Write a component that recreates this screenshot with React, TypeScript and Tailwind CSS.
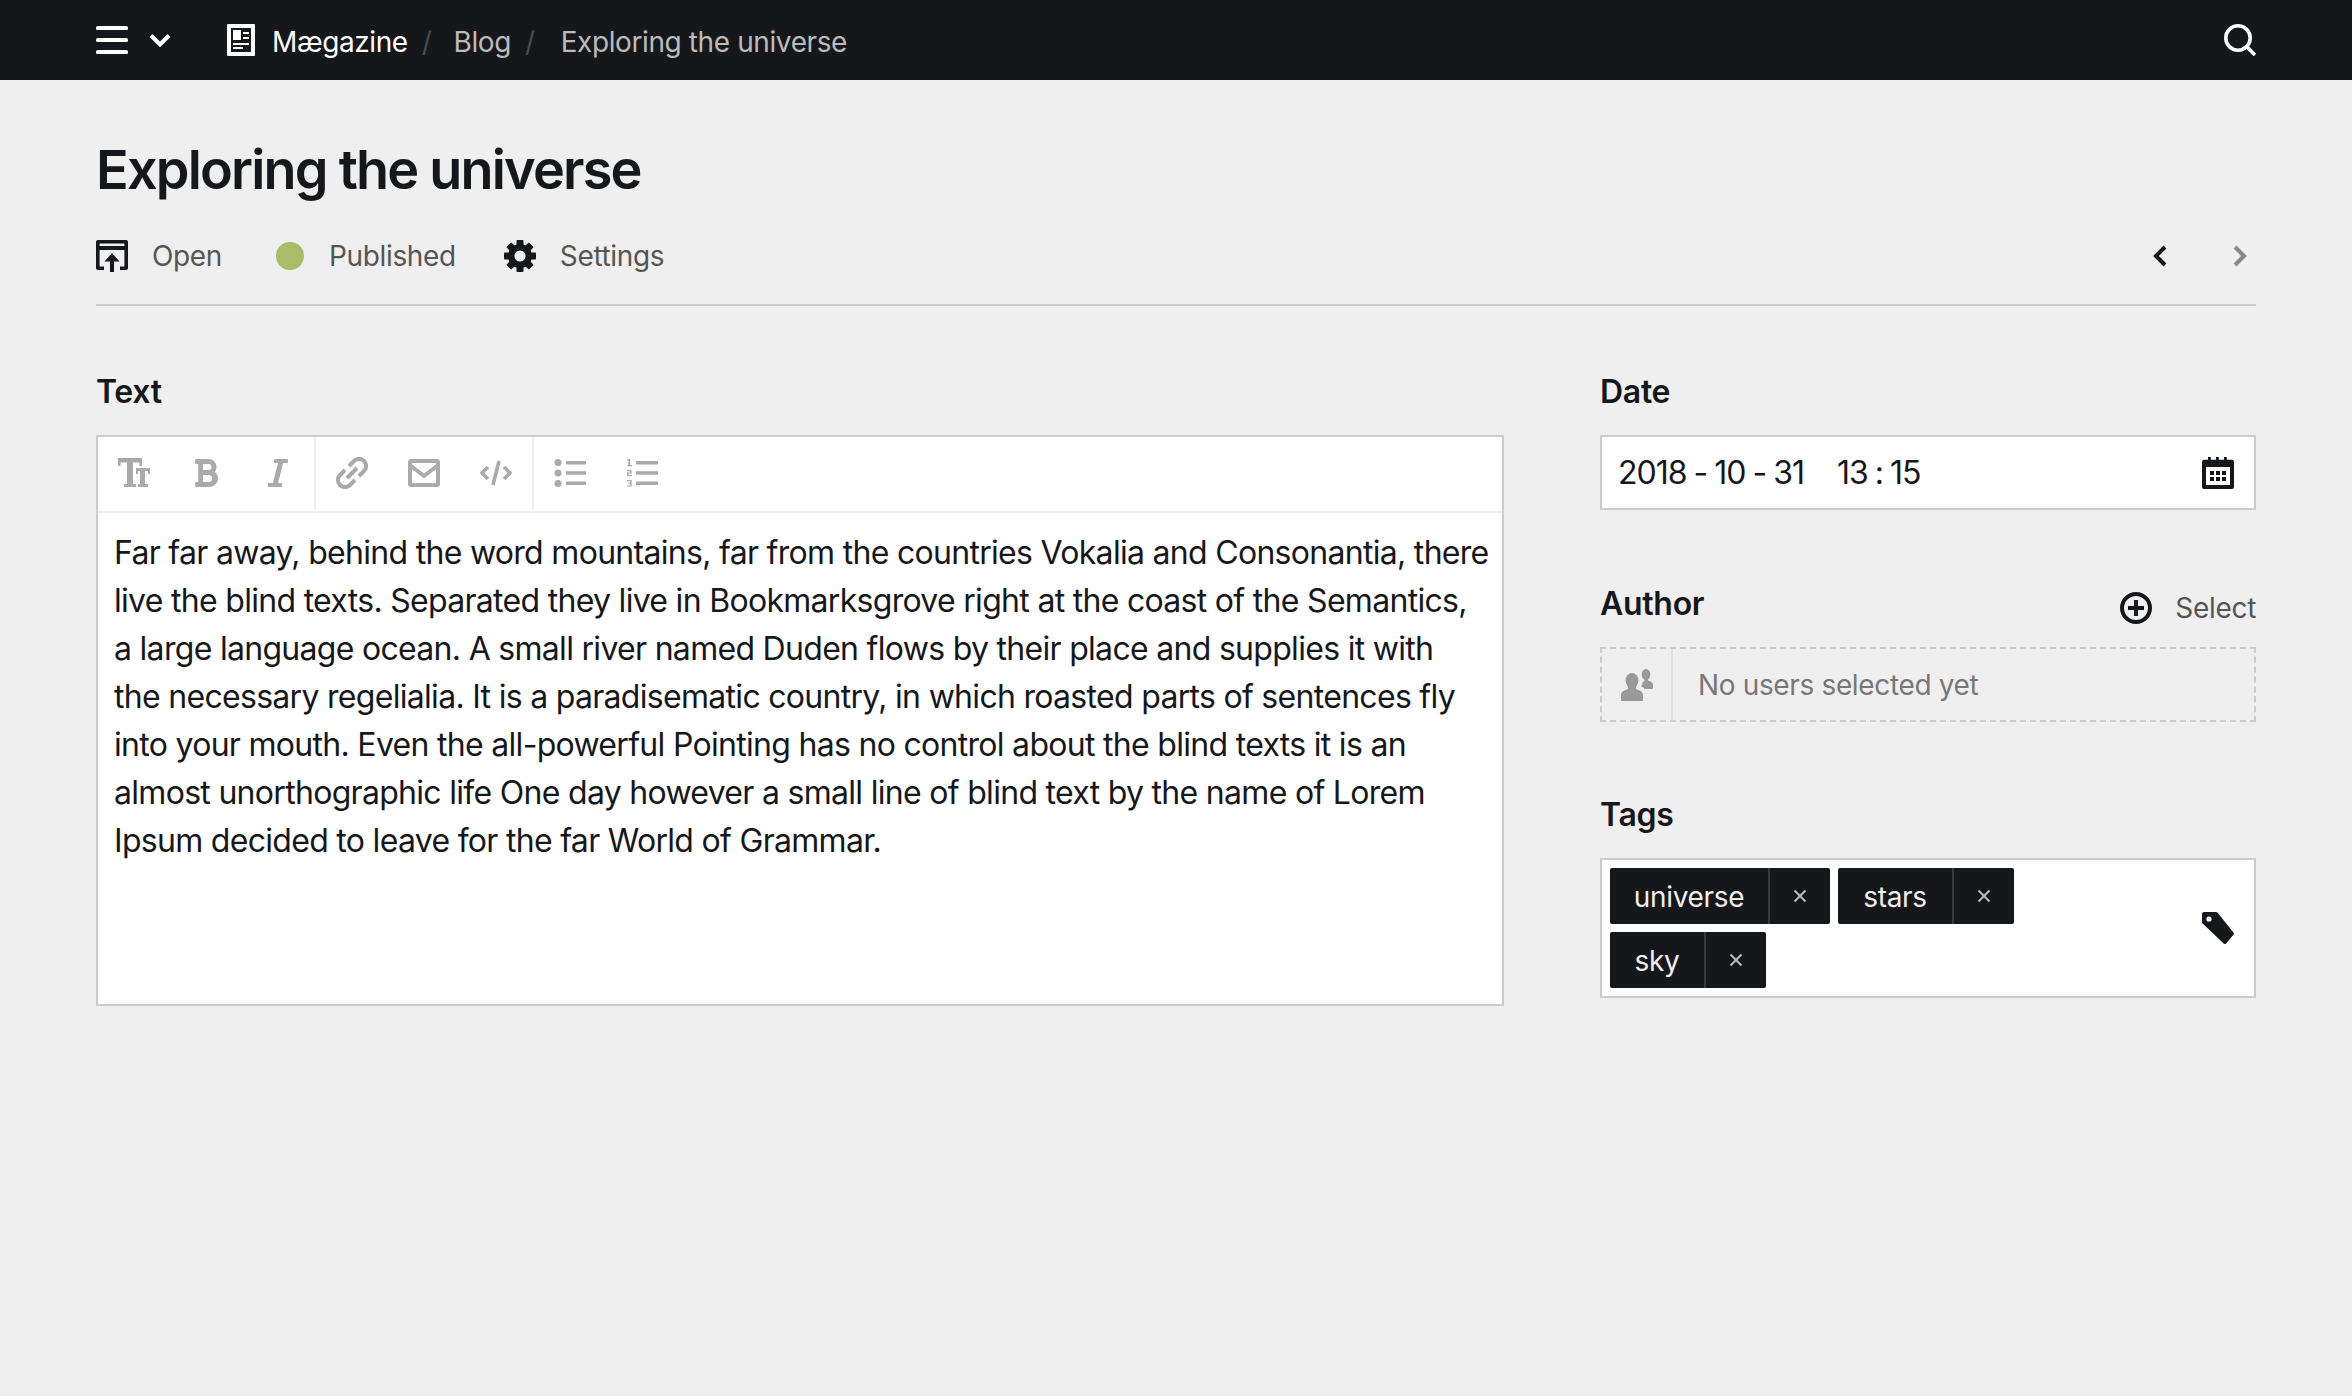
import { FaBold, FaItalic } from "react-icons/fa"

const inter = { fontFamily: "Inter, 'Noto Sans', sans-serif" }

const bodyLines = [
  "Far far away, behind the word mountains, far from the countries Vokalia and Consonantia, there",
  "live the blind texts. Separated they live in Bookmarksgrove right at the coast of the Semantics,",
  "a large language ocean. A small river named Duden flows by their place and supplies it with",
  "the necessary regelialia. It is a paradisematic country, in which roasted parts of sentences fly",
  "into your mouth. Even the all-powerful Pointing has no control about the blind texts it is an",
  "almost unorthographic life One day however a small line of blind text by the name of Lorem",
  "Ipsum decided to leave for the far World of Grammar.",
]

function Icon({ children, className = "" }: { children: React.ReactNode; className?: string }) {
  return (
    <svg viewBox="0 0 16 16" className={`h-8 w-8 shrink-0 ${className}`} fill="currentColor" aria-hidden="true">
      {children}
    </svg>
  )
}

function ToolButton({ children }: { children: React.ReactNode }) {
  return <div className="flex h-full w-[72px] items-center justify-center text-[#aaa]">{children}</div>
}

function Tag({ label, textWidth }: { label: string; textWidth: string }) {
  return (
    <div className="flex h-14 items-stretch rounded-[2px] bg-[#16171a] text-[#efefef]">
      <span className={`flex items-center justify-center pt-[2px] text-[28px] leading-none tracking-[-0.3px] ${textWidth}`}>{label}</span>
      <span className="flex w-[62px] items-center justify-center border-l-2 border-[#3a3b3e]">
        <svg viewBox="0 0 16 16" className="h-4 w-4 text-[#bbb]" stroke="currentColor" strokeWidth="2" fill="none">
          <path d="M2.500 2.500l11 11M13.500 2.500l-11 11" />
        </svg>
      </span>
    </div>
  )
}

export default function App() {
  return (
    <div className="h-[1396px] overflow-hidden bg-[#efefef] text-[#16171a]" style={inter}>
      <header className="flex h-20 items-center justify-between bg-[#16171a] pl-24 pr-24 text-[28px] tracking-[-0.4px] text-white">
        <nav className="flex items-center">
          <svg viewBox="0 0 32 28" className="h-7 w-8" fill="currentColor" aria-hidden="true">
            <rect y="0" width="32" height="4" rx="1.500" />
            <rect y="12" width="32" height="4" rx="1.500" />
            <rect y="24" width="32" height="4" rx="1.500" />
          </svg>
          <svg viewBox="0 0 22 14" className="ml-[21px] h-[14px] w-[22px]" fill="none" stroke="currentColor" strokeWidth="4" aria-hidden="true">
            <path d="M2 2.500l9 9 9-9" />
          </svg>
          <svg viewBox="0 0 28 32" className="ml-[56px] h-8 w-7" fill="currentColor" aria-hidden="true">
            <path fillRule="evenodd" d="M1 0h26a1 1 0 011 1v30a1 1 0 01-1 1H1a1 1 0 01-1-1V1a1 1 0 011-1zm3 4v24h20V4H4zm2 2h8v10H6V6zm10 2h6v2h-6V8zm0 5h6v2h-6v-2zM6 19h16v2H6v-2zm0 4h10v2H6v-2z" />
          </svg>
          <span className="ml-[17px] mt-[3px]">Mægazine</span>
          <span className="ml-[14px] mt-[3px] text-[#4b4c4f]">/</span>
          <span className="ml-[22px] mt-[3px] text-[#bbb]">Blog</span>
          <span className="ml-[14px] mt-[3px] text-[#4b4c4f]">/</span>
          <span className="ml-[26px] mt-[3px] text-[#bbb]">Exploring the universe</span>
        </nav>
        <svg viewBox="0 0 32 32" className="h-8 w-8" fill="none" stroke="currentColor" aria-hidden="true">
          <circle cx="14" cy="14" r="12.200" strokeWidth="3.600" />
          <path d="M23 23l8 8" strokeWidth="3.600" />
        </svg>
      </header>

      <main className="px-24">
        <div className="border-b-2 border-[#ccc] pb-[32px] pt-[58px]">
          <h1 className="text-[54px] font-semibold leading-[64px] tracking-[-1.8px]">Exploring the universe</h1>
          <div className="mt-[38px] flex h-8 items-center justify-between text-[28px] leading-8 tracking-[-0.35px] text-[#555]">
            <div className="flex items-center">
              <Icon className="text-[#16171a]">
                <path d="M0 1a1 1 0 011-1h14a1 1 0 011 1v13a1 1 0 01-1 1h-3v-1.800h2.200V5H1.800v8.200H4V15H1a1 1 0 01-1-1V1zm1.800 2h12.400V1.800H1.800V3zM8 6.600l3.800 4.200H9V16H7v-5.200H4.200L8 6.600z" />
              </Icon>
              <span className="ml-6">Open</span>
              <span className="ml-[54px] h-7 w-7 rounded-full bg-[#a7bd68]" />
              <span className="ml-[25px]">Published</span>
              <svg viewBox="0 0 32 32" className="ml-[48px] h-8 w-8 text-[#16171a]" fill="currentColor" aria-hidden="true">
                <circle cx="16" cy="16" r="8.800" fill="none" stroke="currentColor" strokeWidth="6.400" />
                {[0, 45, 90, 135, 180, 225, 270, 315].map((deg) => (
                  <rect key={deg} x="12.500" y="0" width="7" height="7" rx="1" transform={`rotate(${deg} 16 16)`} />
                ))}
              </svg>
              <span className="ml-[24px]">Settings</span>
            </div>
            <div className="flex items-center gap-[64px] pr-[8px]">
              <svg viewBox="0 0 16 24" className="h-6 w-4 text-[#16171a]" fill="none" stroke="currentColor" strokeWidth="4" aria-hidden="true">
                <path d="M13 3l-9 9 9 9" />
              </svg>
              <svg viewBox="0 0 16 24" className="h-6 w-4 text-[#888]" fill="none" stroke="currentColor" strokeWidth="4" aria-hidden="true">
                <path d="M3 3l9 9-9 9" />
              </svg>
            </div>
          </div>
        </div>

        <div className="mt-[64px] grid grid-cols-[1408px_656px] gap-x-24">
          <section>
            <h2 className="h-[65px] text-[32px] font-semibold leading-[44px] tracking-[-0.3px]">Text</h2>
            <div className="h-[571px] border-2 border-[#ccc] bg-white">
              <div className="flex h-[76px] items-center border-b-2 border-[#efefef] pb-[2px]">
                <div className="flex h-full border-r-2 border-[#efefef]">
                  <ToolButton>
                    <svg viewBox="0 0 32 32" className="h-8 w-8" fill="currentColor" aria-hidden="true">
                      <path d="M0 1h24v8h-2.500V5.500H15V27h3v3H6v-3h3V5.500H2.500V9H0V1z" />
                      <path d="M18 11h14v6h-2v-3h-3v13h3v3H20v-3h2V14h-2v3h-2v-6z" />
                    </svg>
                  </ToolButton>
                  <ToolButton>
                    <FaBold size={32} />
                  </ToolButton>
                  <ToolButton>
                    <FaItalic size={32} />
                  </ToolButton>
                </div>
                <div className="flex h-full border-r-2 border-[#efefef]">
                  <ToolButton>
                    <svg viewBox="0 0 32 32" className="h-8 w-8" fill="none" stroke="currentColor" strokeWidth="4" aria-hidden="true">
                      <path d="M13 9l5-5a7 7 0 0110 10l-5 5M19 23l-5 5A7 7 0 014 18l5-5M11 21l10-10" />
                    </svg>
                  </ToolButton>
                  <ToolButton>
                    <svg viewBox="0 0 32 28" className="h-7 w-8" fill="none" stroke="currentColor" strokeWidth="4" aria-hidden="true">
                      <rect x="2" y="2" width="28" height="24" rx="1" />
                      <path d="M3 7l13 10 13-10" />
                    </svg>
                  </ToolButton>
                  <ToolButton>
                    <svg viewBox="0 0 32 28" className="h-7 w-8" fill="none" stroke="currentColor" strokeWidth="3.600" aria-hidden="true">
                      <path d="M8 8l-6 6 6 6M24 8l6 6-6 6M19 2l-6 24" />
                    </svg>
                  </ToolButton>
                </div>
                <div className="flex h-full">
                  <ToolButton>
                    <svg viewBox="0 0 32 28" className="h-7 w-8" fill="currentColor" aria-hidden="true">
                      <circle cx="4" cy="3.500" r="3.500" />
                      <circle cx="4" cy="14" r="3.500" />
                      <circle cx="4" cy="24.500" r="3.500" />
                      <rect x="12" y="2" width="20" height="3.500" />
                      <rect x="12" y="12.200" width="20" height="3.500" />
                      <rect x="12" y="22.500" width="20" height="3.500" />
                    </svg>
                  </ToolButton>
                  <ToolButton>
                    <svg viewBox="0 0 32 28" className="h-7 w-8" fill="currentColor" aria-hidden="true">
                      <path d="M2 0h2.200v6H6v1.200H1V6h1.400V1.400L1 1.800V.8L2 0z" />
                      <path d="M1 11h4.600v3.600H2.600v1.400h3.200v1.200H1v-3.600h3V12.200H1V11z" />
                      <path d="M1 21h4.600v6.600H1v-1.200h3v-1.600H2v-1.100h2v-1.500H1V21z" />
                      <rect x="10" y="2" width="22" height="3.500" />
                      <rect x="10" y="12.200" width="22" height="3.500" />
                      <rect x="10" y="22.500" width="22" height="3.500" />
                    </svg>
                  </ToolButton>
                </div>
              </div>
              <div className="px-[16px] pt-[16px] text-[32px] leading-[48px] tracking-[-0.7px]">
                {bodyLines.map((line) => (
                  <p key={line} className="whitespace-nowrap">
                    {line}
                  </p>
                ))}
              </div>
            </div>
          </section>

          <aside>
            <h2 className="h-[65px] text-[32px] font-semibold leading-[44px] tracking-[-0.3px]">Date</h2>
            <div className="flex h-[75px] items-center justify-between border-2 border-[#ccc] bg-white pl-[16px] pr-[20px] text-[32px] tracking-[-1px]">
              <div className="flex items-center">
                <span>2018</span>
                <span className="mx-[7px]">-</span>
                <span>10</span>
                <span className="mx-[7px]">-</span>
                <span>31</span>
                <span className="ml-[33px]">13</span>
                <span className="mx-[7px]">:</span>
                <span>15</span>
              </div>
              <Icon>
                <path fillRule="evenodd" d="M3 0h1.400v1.400H7V0h1.400v1.400H11V0h1.400v1.400H15a1 1 0 011 1V15a1 1 0 01-1 1H1a1 1 0 01-1-1V2.400a1 1 0 011-1h2V0zM2 5v9h12V5H2zm2 2h2v2H4V7zm3 0h2v2H7V7zm3 0h2v2h-2V7zM4 10h2v2H4v-2zm3 0h2v2H7v-2zm3 0h2v2h-2v-2z" />
              </Icon>
            </div>

            <div className="mt-[72px] flex h-[65px] items-start justify-between">
              <h2 className="text-[32px] font-semibold leading-[44px] tracking-[-0.3px]">Author</h2>
              <div className="mt-[10px] flex items-center text-[28px] leading-8 tracking-[-0.3px] text-[#555]">
                <svg viewBox="0 0 32 32" className="h-8 w-8 text-[#16171a]" fill="none" stroke="currentColor" strokeWidth="4" aria-hidden="true">
                  <circle cx="16" cy="16" r="14" />
                  <path d="M16 8v16M8 16h16" />
                </svg>
                <span className="ml-[23px]">Select</span>
              </div>
            </div>
            <div className="flex h-[75px] items-stretch border-2 border-dashed border-[#ccc] text-[28px] tracking-[-0.35px] text-[#777]">
              <div className="flex w-[71px] items-center justify-center border-r-2 border-[#e0e0e0] text-[#999]">
                <svg viewBox="0 0 32 32" className="h-8 w-8" fill="currentColor" aria-hidden="true">
                  <ellipse cx="11" cy="11.500" rx="6.500" ry="7.500" />
                  <path d="M7 17h8v3c2.500 1.500 7 2 7 6v5a1 1 0 01-1 1H1a1 1 0 01-1-1v-5c0-4 4.500-4.500 7-6v-3z" />
                  <ellipse cx="25" cy="5.500" rx="4.300" ry="5.500" />
                  <path d="M23 9h4v2.500c2 1 5 1.500 5 4.500v3a1 1 0 01-1 1h-7.500c-.3-1-1.500-2-3.500-2.600.8-1 1.500-2.500 1.700-4.400.5-.3 1.300-.7 1.800-1V9z" />
                </svg>
              </div>
              <span className="ml-[25px] flex items-center">No users selected yet</span>
            </div>

            <h2 className="mt-[71px] h-[65px] text-[32px] font-semibold leading-[44px] tracking-[-0.3px]">Tags</h2>
            <div className="flex h-[140px] items-center justify-between border-2 border-[#ccc] bg-white pl-[8px] pr-[20px]">
              <div className="flex w-[480px] flex-wrap gap-x-2 gap-y-2">
                <Tag label="universe" textWidth="w-[158px]" />
                <Tag label="stars" textWidth="w-[114px]" />
                <Tag label="sky" textWidth="w-[94px]" />
              </div>
              <Icon>
                <path d="M1 0h6a1 1 0 01.8.4l7.900 9.800a1 1 0 010 1.200l-3.500 4.200a1 1 0 01-1.500 0L.3 5.800A1 1 0 010 5.200V1a1 1 0 011-1zm2.500 2.200a1.300 1.300 0 100 2.600 1.300 1.300 0 000-2.600z" fillRule="evenodd" />
              </Icon>
            </div>
          </aside>
        </div>
      </main>
    </div>
  )
}
